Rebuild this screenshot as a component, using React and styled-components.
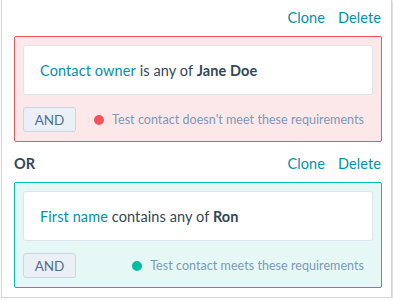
import styled, { createGlobalStyle } from "styled-components";

const Global = createGlobalStyle`
  body {
    margin: 0;
    background: #fff;
    font-family: Lato, "Open Sans", sans-serif;
  }
`;

const Panel = styled.div`
  box-sizing: border-box;
  width: 391px;
  height: 298px;
  margin-left: 1px;
  padding: 0 9px 0 12px;
  background: #fff;
  border: 1px solid #d6d6d6;
  border-top: none;
  box-shadow: 1px 1px 2px rgba(0, 0, 0, 0.18);
`;

const Bar = styled.div`
  box-sizing: border-box;
  height: ${(p) => p.$h}px;
  display: flex;
  align-items: flex-end;
  justify-content: space-between;
  padding-bottom: 9px;
`;

const OrLabel = styled.span`
  font-size: 14.5px;
  font-weight: 700;
  color: #33475b;
  line-height: 18px;
`;

const Actions = styled.div`
  display: flex;
  gap: 13px;
  padding-right: 1px;
`;

const Link = styled.a`
  font-size: 14.5px;
  line-height: 18px;
  letter-spacing: 0.1px;
  color: #0091ae;
  cursor: pointer;
`;

const Group = styled.div`
  box-sizing: border-box;
  height: 106px;
  padding: 8px 8px 9px;
  border: 1px solid ${(p) => (p.$ok ? "#00bda5" : "#f2545b")};
  border-radius: 2px;
  background: ${(p) => (p.$ok ? "#e5f8f6" : "#fde8e9")};
`;

const Filter = styled.div`
  box-sizing: border-box;
  height: 50px;
  display: flex;
  align-items: center;
  padding-left: 16px;
  background: #fff;
  border: 1px solid #dfe3eb;
  border-radius: 3px;
  font-size: 14.5px;
  letter-spacing: 0.1px;
  color: #33475b;
`;

const Prop = styled.span`
  color: #0091ae;
`;

const Value = styled.b`
  font-weight: 700;
`;

const Footer = styled.div`
  display: flex;
  align-items: center;
  justify-content: space-between;
  margin-top: 12px;
`;

const AndButton = styled.button`
  box-sizing: border-box;
  width: 53px;
  height: 25px;
  padding: 0;
  background: #eaf0f6;
  border: 1px solid #cbd6e2;
  border-radius: 3px;
  color: #506e91;
  font-family: inherit;
  font-size: 13.5px;
`;

const Status = styled.div`
  display: flex;
  align-items: center;
  gap: 8px;
  padding-right: 9px;
  font-size: 12.5px;
  letter-spacing: 0.05px;
  color: #7c98b6;
`;

const Dot = styled.span`
  width: 10px;
  height: 10px;
  border-radius: 50%;
  background: ${(p) => (p.$ok ? "#00bda5" : "#f2545b")};
`;

function Header({ label, h }) {
  return (
    <Bar $h={h}>
      {label ? <OrLabel>{label}</OrLabel> : <span />}
      <Actions>
        <Link>Clone</Link>
        <Link>Delete</Link>
      </Actions>
    </Bar>
  );
}

export default function App() {
  return (
    <>
      <Global />
      <Panel>
        <Header h={36} />
        <Group>
          <Filter>
            <Prop>Contact owner</Prop>&nbsp;is any of&nbsp;<Value>Jane Doe</Value>
          </Filter>
          <Footer>
            <AndButton>AND</AndButton>
            <Status>
              <Dot />
              Test contact doesn't meet these requirements
            </Status>
          </Footer>
        </Group>
        <Header label="OR" h={40} />
        <Group $ok>
          <Filter>
            <Prop>First name</Prop>&nbsp;contains any of&nbsp;<Value>Ron</Value>
          </Filter>
          <Footer>
            <AndButton>AND</AndButton>
            <Status>
              <Dot $ok />
              Test contact meets these requirements
            </Status>
          </Footer>
        </Group>
      </Panel>
    </>
  );
}
